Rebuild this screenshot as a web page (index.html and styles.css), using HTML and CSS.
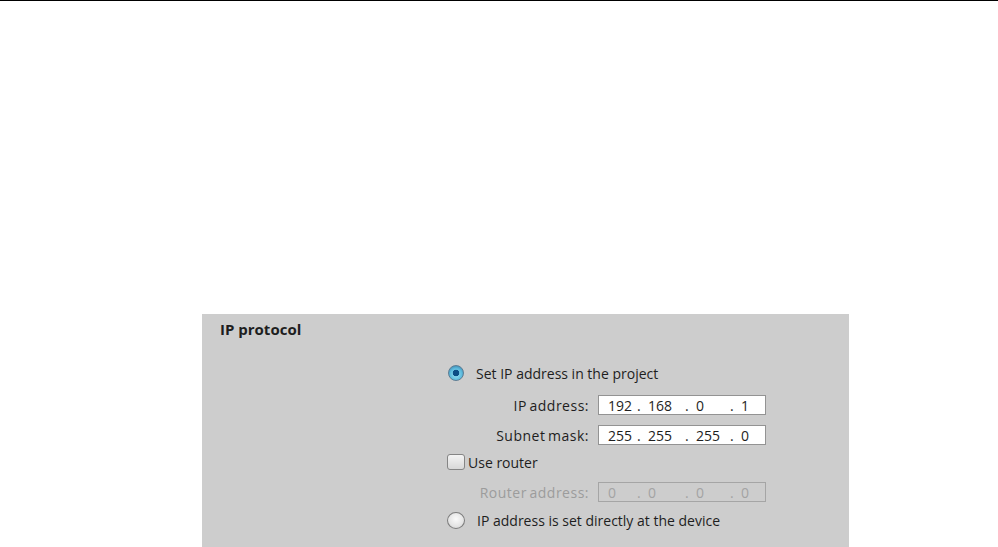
FILE: index.html
```html
<!DOCTYPE html>
<html lang="en">
<head>
  <meta charset="UTF-8" />
  <title>IP protocol</title>
  <link rel="stylesheet" href="styles.css">
</head>
<body>
  <div class="top-rule"></div>

  <section class="panel">
    <h2 class="panel-title">IP protocol</h2>

    <div class="options">
      <div class="row row-first">
        <span class="radio checked"></span>
        <span class="radio-label">Set IP address in the project</span>
      </div>

      <div class="row field row-ip">
        <span class="field-label">IP address:</span>
        <div class="ip-box">
          <span class="oct oct1">192</span>
          <span class="oct oct2">.&nbsp; 168</span>
          <span class="oct oct3">.&nbsp; 0</span>
          <span class="oct oct4">.&nbsp; 1</span>
        </div>
      </div>

      <div class="row field row-mask">
        <span class="field-label">Subnet mask:</span>
        <div class="ip-box">
          <span class="oct oct1">255</span>
          <span class="oct oct2">.&nbsp; 255</span>
          <span class="oct oct3">.&nbsp; 255</span>
          <span class="oct oct4">.&nbsp; 0</span>
        </div>
      </div>

      <div class="row row-check">
        <span class="checkbox"></span>
        <span class="check-label">Use router</span>
      </div>

      <div class="row field row-router disabled">
        <span class="field-label">Router address:</span>
        <div class="ip-box">
          <span class="oct oct1">0</span>
          <span class="oct oct2">.&nbsp; 0</span>
          <span class="oct oct3">.&nbsp; 0</span>
          <span class="oct oct4">.&nbsp; 0</span>
        </div>
      </div>

      <div class="row row-last">
        <span class="radio"></span>
        <span class="radio-label">IP address is set directly at the device</span>
      </div>
    </div>
  </section>
</body>
</html>
```

FILE: styles.css
```css
html, body {
  margin: 0;
  padding: 0;
  background: #ffffff;
  overflow: hidden;
}
body {
  font-family: "Open Sans", "DejaVu Sans", sans-serif;
  font-size: 14px;
  color: #1e1e1e;
}
.top-rule {
  height: 1px;
  background: #000;
}
.panel {
  margin: 313px 0 0 202px;
  width: 647px;
  height: 233px;
  background: #cdcdcd;
}
.panel-title {
  margin: 0;
  padding: 7px 0 0 18px;
  height: 25px;
  font-size: 15px;
  line-height: 16px;
  font-weight: bold;
  color: #1e1e1e;
}
.options {
  display: flex;
  flex-direction: column;
  padding: 15px 0 0 246px;
}
.row {
  display: flex;
  align-items: center;
  white-space: nowrap;
}
.row-first { height: 24px; }
.row-ip { height: 20px; margin-top: 10px; }
.row-mask { height: 20px; margin-top: 10px; }
.row-check { height: 16px; margin-top: 9px; }
.row-router { height: 20px; margin-top: 12px; }
.row-last { height: 16px; margin-top: 10px; }

.radio {
  width: 16px;
  height: 16px;
  box-sizing: border-box;
  border-radius: 50%;
  border: 1px solid #7d7d7d;
  background: radial-gradient(circle at 50% 40%, #fafafa 0%, #e4e4e4 60%, #c9c9c9 100%);
  flex: none;
}
.radio.checked {
  border-color: #5c7d94;
  background:
    radial-gradient(circle at 50% 50%, #0d4d86 0, #0d4d86 3px, rgba(0,0,0,0) 3.6px),
    radial-gradient(circle at 50% 60%, #9ee4f5 0%, #5cb9dc 55%, #2d6f9a 100%);
}
.row-first .radio-label { margin-left: 12px; }
.row-last .radio { margin-left: -1px; width: 18px; height: 17px; }
.row-last .radio-label { margin-left: 12px; }

.checkbox {
  width: 18px;
  height: 16px;
  box-sizing: border-box;
  margin-left: -1px;
  border: 1px solid #858585;
  border-radius: 3px;
  background: linear-gradient(#f4f4f4, #d8d8d8);
  flex: none;
}
.check-label { margin-left: 3px; }

.field-label {
  width: 150px;
  box-sizing: border-box;
  padding-right: 9px;
  text-align: right;
  letter-spacing: 0.5px;
  word-spacing: -1.5px;
}

.ip-box {
  width: 168px;
  height: 20px;
  box-sizing: border-box;
  border: 1px solid #939393;
  background: #ffffff;
  display: flex;
  align-items: center;
  padding-left: 9px;
}
.oct1 { width: 29px; }
.oct2 { width: 48px; }
.oct3 { width: 45px; }
.oct4 { width: 25px; }

.disabled .field-label { color: #9c9c9c; }
.disabled .ip-box {
  background: #cdcdcd;
  border-color: #a5a5a5;
  color: #a3a3a3;
}
```
